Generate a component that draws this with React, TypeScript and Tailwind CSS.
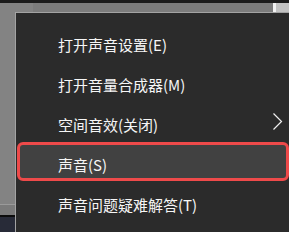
import React from "react";

const items = [
  "打开声音设置(E)",
  "打开音量合成器(M)",
  "空间音效(关闭)",
  "声音(S)",
  "声音问题疑难解答(T)",
];

export default function App() {
  return (
    <div
      className="relative w-[289px] h-[232px] overflow-hidden bg-[#7d7d7d]"
      style={{ fontFamily: '"Noto Sans CJK SC", "Noto Sans", sans-serif' }}
    >
      {/* background desktop */}
      <div className="h-[3px] bg-[#1c1c1c]" />
      <div className="flex h-[9px]">
        <div className="w-[33px] bg-[#838383]" />
        <div className="flex-1 bg-[#7c7c7c]" />
        <div className="w-[3px] bg-[#f2f2f2]" />
        <div className="w-[13px] bg-[#c3c3c3]" />
      </div>
      <div className="w-[15px]">
        <div className="h-[192px] bg-[#838383]" />
        <div className="h-[1px] bg-[#9a9a9a]" />
        <div className="h-[10px] bg-[#7a7a7a]" />
        <div className="h-[2px] bg-[#0c0c0c]" />
        <div className="h-[20px] bg-[#282b38]" />
      </div>

      {/* context menu */}
      <div className="absolute left-[15px] top-[12px] w-[274px] h-[220px] border-l border-t border-[#a3a3a3] bg-[#2b2b2b] pt-[11px]">
        {items.map((t, i) => (
          <div key={t} className="relative flex h-[40px] w-[273px] items-center pl-[42px]">
            {i === 3 && (
              <div className="absolute left-[1px] top-[-2px] h-[39px] w-[272px] rounded-[6px] border-[3px] border-[#ee4a4a] bg-[#414141]" />
            )}
            <span className="relative text-[15px] leading-none text-[#f6f6f6]">
              {t}
            </span>
            {i === 2 && (
              <svg
                className="absolute left-[256px] top-[8px]"
                width="11"
                height="19"
                viewBox="0 0 11 19"
              >
                <polyline
                  points="1.5,1.5 9.5,9.5 1.5,17.5"
                  fill="none"
                  stroke="#f0f0f0"
                  strokeWidth="1.2"
                />
              </svg>
            )}
          </div>
        ))}
      </div>
    </div>
  );
}
